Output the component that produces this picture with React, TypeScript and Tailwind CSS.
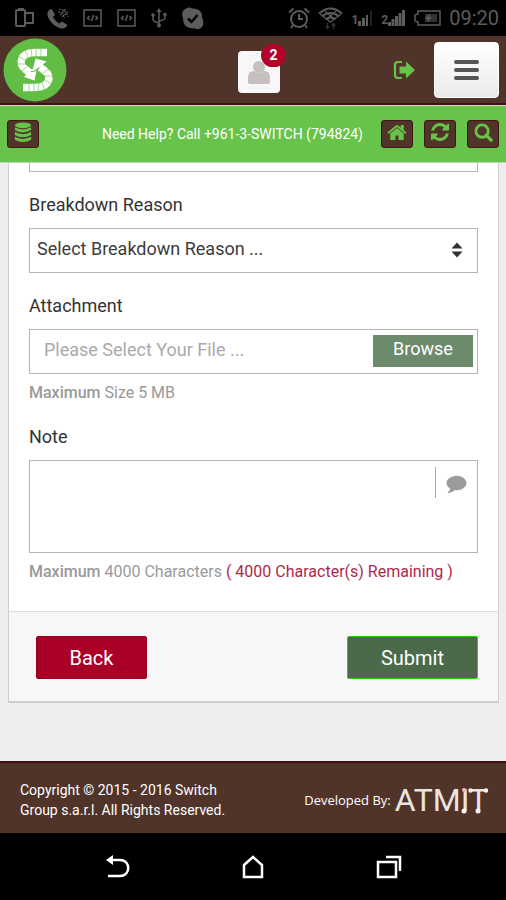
import { useState } from "react";
import type { ReactNode } from "react";

const MAX_CHARS = 4000;

function StatusBar() {
  return (
    <div className="flex h-9 items-center justify-between bg-black pl-[14px] pr-[7px] text-[#5c5c5c]">
      <div className="flex items-center gap-[13px]">
        <svg className="h-[22px] w-5" viewBox="0 0 20 22" fill="none" stroke="currentColor" strokeWidth="2">
          <rect x="2" y="3" width="9" height="16" rx="1" />
          <path d="M4 2h6M12 6h7v10h-7" />
        </svg>
        <svg className="h-[22px] w-[22px]" viewBox="0 0 22 22" fill="currentColor">
          <path d="M4.5 2 8 7.500 6 10q2 4 6 6.500l3-2 5.500 3.500q-2 3.500-5 3.500C9 21.500 0 13 .5 6.500.5 4 3 2 4.500 2z" />
          <path d="M11 5q5 0 6.500 6M12 2q7 1 9 8M13 8l6-6M15 10l6-5" fill="none" stroke="currentColor" strokeWidth="1.200" strokeDasharray="2 1" />
        </svg>
        {[0, 1].map((key) => (
          <svg key={key} className="h-5 w-[21px]" viewBox="0 0 21 20" fill="none" stroke="currentColor" strokeWidth="1.500">
            <rect x="2" y="2" width="17" height="16" />
            <path d="M7.500 8 5.500 10l2 2M13.500 8l2 2-2 2M11.500 7l-2 6" />
          </svg>
        ))}
        <svg className="h-5 w-[18px]" viewBox="0 0 18 20" fill="none" stroke="currentColor" strokeWidth="1.500">
          <path d="M9 3v15M3 7v4q0 3 6 4M15 7v3q0 2-6 3" />
          <path d="m9 0 2.500 4h-5zM13.500 5h3v3h-3z" fill="currentColor" stroke="none" />
          <circle cx="3" cy="7" r="1.800" fill="currentColor" stroke="none" />
          <circle cx="9" cy="17.500" r="2" fill="currentColor" stroke="none" />
        </svg>
        <svg className="h-[23px] w-[23px]" viewBox="0 0 23 23">
          <path d="M6 1q3-1 5 .5 10-1 10.500 10Q24 18 20 21q-3 2-6 .5Q2 22 2 11-1 4 6 1z" fill="currentColor" />
          <path d="m7 11.500 3.500 3.500 6-7" fill="none" stroke="#000" strokeWidth="2.500" />
        </svg>
      </div>
      <div className="flex items-center gap-2">
        <svg className="h-[22px] w-[22px]" viewBox="0 0 22 22" fill="none" stroke="currentColor" strokeWidth="2">
          <circle cx="11" cy="12" r="8" />
          <path d="M11 7v5h4M1 5.500 5.500 1.500M21 5.500l-4.500-4M5 18l-2 3M17 18l2 3" />
        </svg>
        <svg className="h-[23px] w-[25px]" viewBox="0 0 25 23" fill="none" stroke="currentColor">
          <path d="M1 6.500q11.500-10 23 0M4 9.500q8.500-7 17 0M7.500 12.500q5-4 10 0" strokeWidth="1.800" />
          <path d="m2 7 10.500 8L23 7M7 4l9 8M18 4l-9 8" strokeWidth="1.200" />
          <path d="M9.500 16v5m-2-2 2 2.500 2-2.500M15.500 22v-5m-2 2 2-2.500 2 2.500" strokeWidth="1.200" opacity=".6" />
        </svg>
        <div className="flex items-end">
          <span className="text-xs leading-3 font-bold">1</span>
          <svg className="h-4 w-[15px]" viewBox="0 0 15 16" fill="currentColor">
            <path d="M0 11h3v5H0zM4 8h3v8H4zM8 5h2v11H8z" />
            <path d="M12 1h2v15h-2z" fill="#222" />
          </svg>
        </div>
        <div className="flex items-end">
          <span className="text-xs leading-3 font-bold">2</span>
          <svg className="h-4 w-[17px]" viewBox="0 0 17 16" fill="currentColor">
            <path d="M0 12h3v4H0zM3.500 9h3v7h-3zM7 6h3v10H7zM10.500 3h3v13h-3zM14 0h3v16h-3z" />
          </svg>
        </div>
        <svg className="h-[18px] w-7" viewBox="0 0 28 18">
          <path d="M5 2h22v14H5v-3L2 12V6l3-1z" fill="none" stroke="currentColor" strokeWidth="1.500" />
          <path d="M12 5h12v8H12z" fill="#333" />
          <path d="m17 4-5 6h3l-1 4 5-6h-3z" fill="currentColor" />
        </svg>
        <span className="text-xl leading-6">09:20</span>
      </div>
    </div>
  );
}

function SwitchLogo() {
  return (
    <svg className="h-16 w-16" viewBox="0 0 64 64" role="img" aria-label="Switch">
      <circle cx="32" cy="32" r="31.500" fill="#62bd45" />
      <g fill="none" stroke="#fff" strokeWidth="7.500">
        <path d="M44 14.500H32C17 14.500 15 26 22 31l5 4" />
        <path d="M20 49.500h12c15 0 17-11.500 10-16.500l-5-4" />
      </g>
      <path d="M38 10v9M33 10v9M28 10l1 9M22 12l3 7M15 18l7 4M14 26h9M17 34l7-5M26 45v9M31 45v9M36 45l-1 9M42 52l-3-7M49 46l-7-4M50 38h-9M47 30l-7 5" stroke="#62bd45" strokeWidth=".6" />
      <path d="M31.500 42.500 34 30l-5 1-8 8z" fill="#fff" />
      <path d="M32.500 20.500 29.500 33l4-1.500 10-8z" fill="#fff" />
      <path d="m28 33.500 4-.5 4-3" fill="none" stroke="#62bd45" strokeWidth="1.200" />
    </svg>
  );
}

function BarButton({ label, children }: { label: string; children: ReactNode }) {
  return (
    <button
      type="button"
      aria-label={label}
      className="flex h-7 w-8 items-start justify-center rounded-[3px] border border-[#421710] bg-[#50342a] pt-px text-[#68c34a]"
    >
      {children}
    </button>
  );
}

function Header() {
  return (
    <header>
      <div className="flex h-[69px] items-center justify-between border-b-2 border-[#421010] bg-[#50342a] pl-[3px] pr-[7px]">
        <a href="#home" aria-label="Switch home" className="flex w-1/3">
          <SwitchLogo />
        </a>
        <button type="button" aria-label="Account, 2 notifications" className="relative mt-1 ml-4 flex h-[42px] w-[42px] items-center justify-center rounded-sm bg-[#f7f7f7]">
          <svg className="h-[26px] w-6" viewBox="0 0 24 26" fill="#c5bfbd">
            <circle cx="12" cy="8" r="6" />
            <path d="M1 23v-5q0-6 6-6 5 4 10 0 6 0 6 6v5q0 2-2 2H3q-2 0-2-2z" />
          </svg>
          <span className="absolute -top-[7px] -right-[6px] flex h-[23px] w-[25px] items-center justify-center rounded-full bg-[#b0042a] text-sm font-bold text-white">
            2
          </span>
        </button>
        <div className="flex w-1/3 items-center justify-end gap-[18px]">
          <a href="#logout" aria-label="Log out" className="text-[#68c34a]">
            <svg className="h-5 w-6" viewBox="0 0 24 20">
              <path d="M10 2H6Q3 2 3 5v10q0 3 3 3h4" fill="none" stroke="currentColor" strokeWidth="2.200" />
              <path d="M7.500 6.500H14V1.500l9 8.500-9 8.500V13.500H7.500z" fill="currentColor" />
            </svg>
          </a>
          <button type="button" aria-label="Menu" className="flex h-14 w-[65px] flex-col items-center justify-center gap-1 rounded-sm border border-white bg-linear-to-b from-white to-[#ebebeb]">
            <span className="h-1 w-[25px] rounded-xs bg-[#555]" />
            <span className="h-1 w-[25px] rounded-xs bg-[#555]" />
            <span className="h-1 w-[25px] rounded-xs bg-[#555]" />
          </button>
        </div>
      </div>
      <div className="flex h-[58px] items-center justify-between border-t border-b border-t-[#d4d8cb] border-b-[#b7d9aa] bg-[#68c34a] px-[7px]">
        <BarButton label="Records">
          <svg className="h-[21px] w-[18px]" viewBox="0 0 18 22" fill="currentColor">
            <ellipse cx="9" cy="3.500" rx="8.500" ry="3" />
            <path d="M.5 5.500q8.500 4.500 17 0v3q-8.500 5-17 0zM.5 10.500q8.500 4.500 17 0v3q-8.500 5-17 0zM.5 15.500q8.500 4.500 17 0v3q-8.500 5-17 0z" />
          </svg>
        </BarButton>
        <div className="flex items-center gap-[18px]">
          <p className="text-sm text-white">Need Help? Call +961-3-SWITCH (794824)</p>
          <div className="flex gap-[11px]">
            <BarButton label="Home">
              <svg className="h-[18px] w-5" viewBox="0 0 1664 1536" fill="currentColor">
                <path d="M1408 992v480q0 26-19 45t-45 19h-384v-384h-256v384h-384q-26 0-45-19t-19-45v-480q0-1 .5-3t.5-3l575-474 575 474q1 2 1 6zm223-69l-62 74q-8 9-21 11h-3q-13 0-21-7l-692-577-692 577q-12 8-24 7-13-2-21-11l-62-74q-8-10-7-23.500t11-21.500l719-599q32-26 76-26t76 26l244 204v-195q0-14 9-23t23-9h192q14 0 23 9t9 23v408l219 182q10 8 11 21.500t-7 23.500z" />
              </svg>
            </BarButton>
            <BarButton label="Refresh">
              <svg className="mt-px h-[18px] w-[18px]" viewBox="0 0 1536 1536" fill="currentColor">
                <path d="M1511 928q0 5-1 7-64 268-268 434.500t-478 166.500q-146 0-282.500-55t-243.500-157l-129 129q-19 19-45 19t-45-19-19-45v-448q0-26 19-45t45-19h448q26 0 45 19t19 45-19 45l-137 137q71 66 161 102t187 36q134 0 250-65t186-179q11-17 53-117 8-23 30-23h192q13 0 22.500 9.500t9.500 22.500zm25-800v448q0 26-19 45t-45 19h-448q-26 0-45-19t-19-45 19-45l138-138q-148-137-349-137-134 0-250 65t-186 179q-11 17-53 117-8 23-30 23h-199q-13 0-22.500-9.500t-9.500-22.500v-7q65-268 270-434.500t480-166.500q146 0 284 55.500t245 156.500l130-129q19-19 45-19t45 19 19 45z" />
              </svg>
            </BarButton>
            <BarButton label="Search">
              <svg className="mt-px h-[19px] w-[19px]" viewBox="0 0 20 20" fill="none" stroke="currentColor" strokeWidth="3">
                <circle cx="8.500" cy="8.500" r="6.500" />
                <path d="m13 13 5 5" strokeWidth="3.500" strokeLinecap="round" />
              </svg>
            </BarButton>
          </div>
        </div>
      </div>
    </header>
  );
}

function TicketForm() {
  const [note, setNote] = useState("");

  return (
    <form className="border-x border-b-2 border-[#cdcdcd] bg-white" onSubmit={(e) => e.preventDefault()}>
      <div className="overflow-hidden px-5 pb-[27px]">
        <input aria-label="Reference" className="-mt-9 block h-[45px] w-full border border-[#b4b4b4] px-2" />

        <label htmlFor="reason" className="mt-[21px] block text-lg leading-6 text-[#333]">
          Breakdown Reason
        </label>
        <div className="relative mt-[11px]">
          <select id="reason" className="block h-[45px] w-full appearance-none border border-[#b4b4b4] bg-white pb-1 pl-[7px] text-lg text-[#3c3c3c]">
            <option>Select Breakdown Reason ...</option>
          </select>
          <svg className="pointer-events-none absolute top-[14px] right-[15px] h-4 w-3" viewBox="0 0 12 16" fill="#333">
            <path d="m6 .5 5.500 6H.5zM6 15.500l-5.500-6h11z" />
          </svg>
        </div>

        <label htmlFor="attachment" className="mt-[21px] block text-lg leading-6 text-[#333]">
          Attachment
        </label>
        <div className="mt-[11px] flex h-[45px] items-center border border-[#b4b4b4] pr-1">
          <input
            id="attachment"
            readOnly
            placeholder="Please Select Your File ..."
            className="min-w-0 flex-1 pb-1 pl-[14px] text-lg outline-none placeholder:text-[#aaa]"
          />
          <button type="button" className="mb-[2px] h-8 w-[100px] bg-[#6c8b6c] pb-1 text-lg leading-6 text-white">
            Browse
          </button>
        </div>
        <p className="mt-[7px] text-base leading-6 text-[#999]">
          <strong className="font-medium">Maximum</strong> Size 5 MB
        </p>

        <label htmlFor="note" className="mt-5 block text-lg leading-6 text-[#333]">
          Note
        </label>
        <div className="relative mt-[11px]">
          <textarea
            id="note"
            maxLength={MAX_CHARS}
            value={note}
            onChange={(e) => setNote(e.target.value)}
            className="block h-[93px] w-full resize-none border border-[#b4b4b4] py-2 pr-12 pl-3 text-lg"
          />
          <div className="pointer-events-none absolute top-[7px] right-[11px] flex h-[31px] items-center border-l border-[#aaa] pl-[10px]">
            <svg className="h-5 w-[21px]" viewBox="0 0 1792 1792" fill="#9b9b9b">
              <path d="M1792 896q0 174-120 321.500t-326 233-450 85.500q-70 0-145-8-198 175-460 242-49 14-114 22-17 2-30.500-9t-17.500-29v-1q-3-4-.5-12t2-10 4.500-9.500l6-9 7-8.500 8-9q7-8 31-34.500t34.500-38 31-39.500 32.500-51 27-59 26-76q-157-89-247.500-220t-90.500-281q0-130 71-248.500t191-204.500 286-136.500 348-50.500q244 0 450 85.500t326 233 120 321.500z" />
            </svg>
          </div>
        </div>
        <p className="mt-[7px] text-base leading-6 text-[#999]">
          <strong className="font-medium">Maximum</strong> {MAX_CHARS} Characters{" "}
          <span className="text-[#b0284a]">( {MAX_CHARS - note.length} Character(s) Remaining )</span>
        </p>
      </div>

      <div className="flex justify-between border-t border-[#dedede] bg-[#f7f7f7] pt-6 pr-5 pb-[22px] pl-[27px]">
        <button type="button" className="h-[43px] w-[111px] rounded-xs border border-[#98001f] bg-[#aa0028] text-xl text-white">
          Back
        </button>
        <button type="submit" className="h-[43px] w-[131px] rounded-xs border border-[#35c40f] bg-[#4b6a49] text-xl text-white">
          Submit
        </button>
      </div>
    </form>
  );
}

function Footer() {
  return (
    <footer className="flex items-center justify-between border-t-2 border-[#421010] bg-[#50342a] pt-[17px] pr-[18px] pb-[13px] pl-5 text-sm leading-5 text-white">
      <p>
        Copyright © 2015 - 2016 Switch
        <br />
        Group s.a.r.l. All Rights Reserved.
      </p>
      <div className="flex items-center gap-1">
        <span className="font-['Open_Sans',sans-serif] text-[13px]">Developed By:</span>
        <a href="#atmit" className="relative text-[32px] leading-8 text-[#ebe5e1]">
          ATMIT
          <svg className="absolute top-0 right-0 h-8 w-8" viewBox="0 0 32 32" fill="#f7f3f0">
            <circle cx="8" cy="6" r="2" fill="#e3b9dc" />
            <circle cx="8" cy="27" r="2.500" />
            <circle cx="14.500" cy="6.500" r="2.200" />
            <circle cx="30" cy="6.500" r="2.200" />
            <circle cx="22" cy="27" r="2.500" />
          </svg>
        </a>
      </div>
    </footer>
  );
}

function NavBar() {
  return (
    <nav className="flex h-[67px] items-center justify-center gap-[111px] bg-black pl-[2px] text-white">
      <button type="button" aria-label="Back">
        <svg className="h-6 w-6" viewBox="0 0 24 24" fill="none" stroke="currentColor" strokeWidth="2.500">
          <path d="M3 5h11c11 0 11 16 0 16H2" />
          <path d="M0 5 7 0v10z" fill="currentColor" stroke="none" />
        </svg>
      </button>
      <button type="button" aria-label="Home">
        <svg className="h-6 w-6" viewBox="0 0 24 24" fill="none" stroke="currentColor" strokeWidth="2.500">
          <path d="M3 10 12 2l9 8v12H3z" />
        </svg>
      </button>
      <button type="button" aria-label="Recent apps">
        <svg className="h-6 w-[26px]" viewBox="0 0 26 24" fill="none" stroke="currentColor" strokeWidth="2.500">
          <path d="M2 7h18v15H2zM10 2h14v14" />
        </svg>
      </button>
    </nav>
  );
}

export default function App() {
  return (
    <div className="flex min-h-screen flex-col bg-[#eee] font-[Roboto,sans-serif]">
      <StatusBar />
      <Header />
      <main className="flex-1 pr-[7px] pb-[58px] pl-2">
        <TicketForm />
      </main>
      <Footer />
      <NavBar />
    </div>
  );
}
